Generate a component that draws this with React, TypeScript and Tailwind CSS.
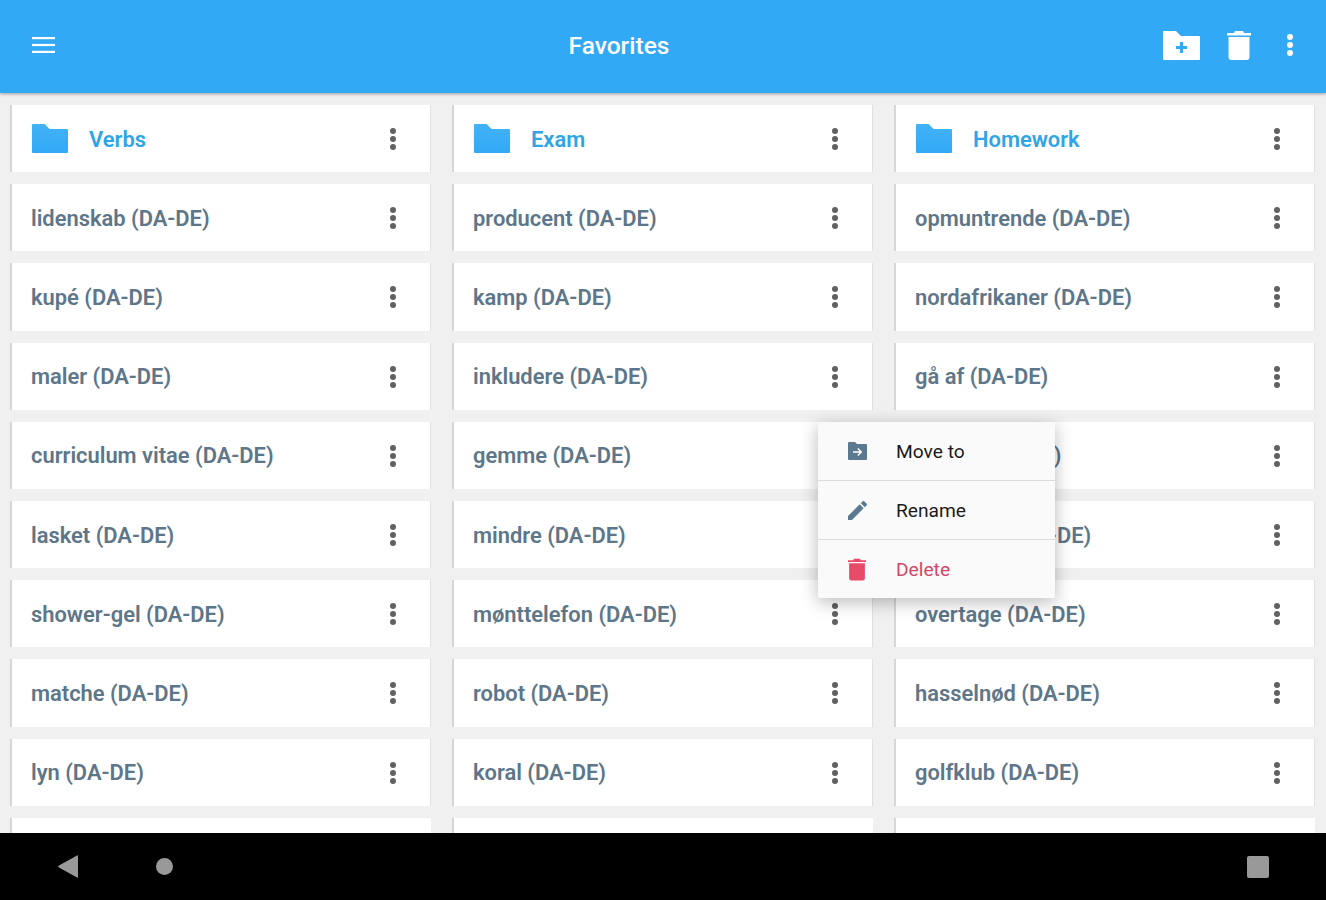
import { ReactNode } from 'react';

const folders = ['Verbs', 'Exam', 'Homework'];

const rows = [
    ['lidenskab', 'producent', 'opmuntrende'],
    ['kupé', 'kamp', 'nordafrikaner'],
    ['maler', 'inkludere', 'gå af'],
    ['curriculum vitae', 'gemme', 'bringe'],
    ['lasket', 'mindre', 'fortsætte'],
    ['shower-gel', 'mønttelefon', 'overtage'],
    ['matche', 'robot', 'hasselnød'],
    ['lyn', 'koral', 'golfklub'],
];

function Dots({ className }: { className: string }) {
    return (
        <svg width="8" height="24" viewBox="0 0 8 24" className={className} fill="currentColor">
            <circle cx="4" cy="4" r="3" />
            <circle cx="4" cy="12" r="3" />
            <circle cx="4" cy="20" r="3" />
        </svg>
    );
}

function FolderIcon() {
    return (
        <svg width="36" height="29" viewBox="0 0 37 29" preserveAspectRatio="none" className="shrink-0 ml-[1px]">
            <defs>
                <linearGradient id="folderFill" x1="0" y1="0" x2="0" y2="1">
                    <stop offset="0" stopColor="#43b2f7" />
                    <stop offset="1" stopColor="#31a9f5" />
                </linearGradient>
            </defs>
            <path d="M0 1Q0 0 1 0H13L18 5H36Q37 5 37 6V28Q37 29 36 29H1Q0 29 0 28Z" fill="url(#folderFill)" />
        </svg>
    );
}

function Card({ children }: { children: ReactNode }) {
    return (
        <div className="h-[67.2px] shrink-0 bg-white border-l-[2px] border-r-[1px] border-l-[#d6d6d6] border-r-[#e0e0e0] flex items-center justify-between pl-[19px] pr-[33px]">
            {children}
            <Dots className="text-[#616161] shrink-0 mt-[1px]" />
        </div>
    );
}

export default function App() {
    return (
        <div className="relative h-[900px] w-[1326px] overflow-hidden flex flex-col bg-[#f0f0f0] font-['Roboto',sans-serif]">
            {/* Toolbar */}
            <header className="relative z-10 h-[93px] shrink-0 bg-[#31a9f5] shadow-[0_1px_3px_rgba(0,0,0,0.35)] flex items-center text-white">
                <div className="w-[88px] pl-[32px] shrink-0 -mt-[3px]">
                    <svg width="23" height="16" viewBox="0 0 23 16" fill="white">
                        <rect x="0" y="0" width="23" height="2.2" />
                        <rect x="0" y="6.9" width="23" height="2.2" />
                        <rect x="0" y="13.8" width="23" height="2.2" />
                    </svg>
                </div>
                <h1 className="flex-1 text-center text-[24.5px] font-medium">Favorites</h1>
                <div className="w-[176px] shrink-0 flex items-center pl-[13px] -mt-[3px]">
                    <svg width="37" height="29" viewBox="0 0 37 29">
                        <path d="M0 1Q0 0 1 0H13L18 5H36Q37 5 37 6V28Q37 29 36 29H1Q0 29 0 28Z" fill="white" />
                        <path d="M17 11h3v4h4v3h-4v4h-3v-4h-4v-3h4z" fill="#31a9f5" />
                    </svg>
                    <svg width="24" height="29" viewBox="0 0 24 29" fill="white" className="ml-[27px]">
                        <path d="M8 0H16L17 2H24V4.500H0V2H7Z" />
                        <path d="M1.500 6H22.500V26Q22.500 29 19.500 29H4.500Q1.500 29 1.500 26Z" />
                    </svg>
                    <Dots className="text-white ml-[35px]" />
                </div>
            </header>

            {/* Favorites list */}
            <main className="flex-1 min-h-0 overflow-hidden pt-[12px] pl-[10px]">
                <div className="grid grid-cols-[421px_421px_421px] gap-x-[21px] gap-y-[12px]">
                    {folders.map((name) => (
                        <Card key={name}>
                            <div className="flex items-center gap-[21px] text-[21.9px] font-semibold text-[#2fa5e8]">
                                <FolderIcon />
                                <span className="pt-[3px]">{name}</span>
                            </div>
                        </Card>
                    ))}
                    {rows.flat().map((word) => (
                        <Card key={word}>
                            <span className="pt-[3px] text-[21.9px] font-semibold text-[#5d7689]">{word} (DA-DE)</span>
                        </Card>
                    ))}
                    <div className="h-[67.2px] bg-white border-l-[2px] border-l-[#d6d6d6]" />
                    <div className="h-[67.2px] bg-white border-l-[2px] border-l-[#d6d6d6]" />
                    <div className="h-[67.2px] bg-white border-l-[2px] border-l-[#d6d6d6]" />
                </div>
            </main>

            {/* Context menu */}
            <div className="absolute z-20 left-[818px] top-[422px] w-[237px] rounded-[2px] bg-[#fafafa] shadow-[0_4px_18px_rgba(0,0,0,0.28)] flex flex-col text-[19.2px]">
                <div className="h-[59px] flex items-center border-b border-[#dcdcdc]">
                    <div className="w-[78px] pl-[30px] shrink-0">
                        <svg width="19" height="18" viewBox="0 0 19 18" className="block">
                            <path d="M0 1Q0 0 1 0H7L9 2H18Q19 2 19 3V17Q19 18 18 18H1Q0 18 0 17Z" fill="#5b7a90" />
                            <path d="M5 9.200H11.500L9.300 7L10.300 6L14.300 10L10.300 14L9.300 13L11.500 10.800H5Z" fill="white" />
                        </svg>
                    </div>
                    <span className="pt-[2px] text-[#1a1a1a]">Move to</span>
                </div>
                <div className="h-[59px] flex items-center border-b border-[#dcdcdc]">
                    <div className="w-[78px] pl-[30px] shrink-0">
                        <svg width="19" height="19" viewBox="3 3 18 18" className="block" fill="#5b7a90">
                            <path d="M3 17.250V21h3.750L17.810 9.940l-3.750-3.750L3 17.250zM20.710 7.040a1 1 0 0 0 0-1.410l-2.340-2.340a1 1 0 0 0-1.410 0l-1.830 1.830 3.750 3.750 1.830-1.830z" />
                        </svg>
                    </div>
                    <span className="pt-[2px] text-[#1a1a1a]">Rename</span>
                </div>
                <div className="h-[58px] flex items-center">
                    <div className="w-[78px] pl-[30px] shrink-0">
                        <svg width="18" height="23" viewBox="0 0 24 29" fill="#e84a6a" className="block">
                            <path d="M8 0H16L17 2H24V4.500H0V2H7Z" />
                            <path d="M1.500 6H22.500V26Q22.500 29 19.500 29H4.500Q1.500 29 1.500 26Z" />
                        </svg>
                    </div>
                    <span className="pt-[2px] text-[#cf4767]">Delete</span>
                </div>
            </div>

            {/* Android navigation bar */}
            <nav className="relative z-10 h-[67px] shrink-0 bg-black flex items-center pl-[58px] pr-[57px]">
                <svg width="20" height="23" viewBox="0 0 20 23" fill="#999999">
                    <path d="M20 1V22Q20 23 19 22.500L0.500 12.200Q0 11.500 0.500 10.800L19 0.500Q20 0 20 1Z" />
                </svg>
                <div className="ml-[78px] h-[17px] w-[17px] rounded-full bg-[#999999]" />
                <div className="ml-auto h-[22px] w-[22px] rounded-[2px] bg-[#999999]" />
            </nav>
        </div>
    );
}
